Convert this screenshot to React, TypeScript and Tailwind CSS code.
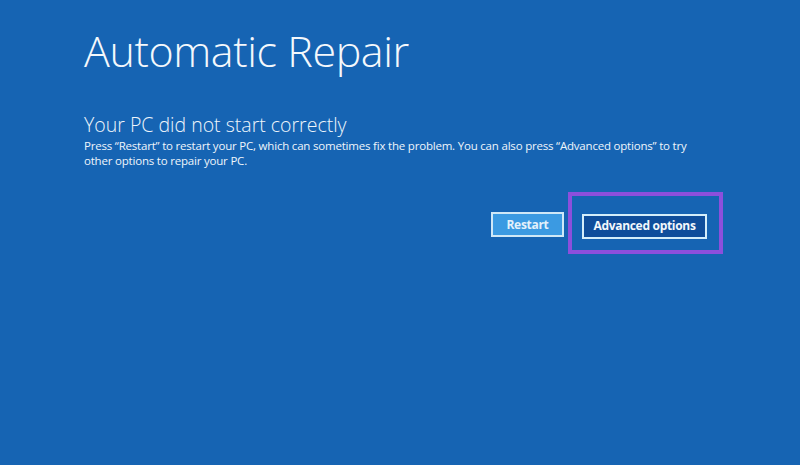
import React from "react";

const font = { fontFamily: '"Open Sans", "Noto Sans", "Liberation Sans", sans-serif' };

export default function App() {
  return (
    <div
      className="w-[800px] h-[465px] overflow-hidden bg-[#1664b3] text-white pl-[84px] pr-[77px]"
      style={font}
    >
      <h1 className="pt-[25px] text-[43px] font-light leading-[52px] tracking-[-0.4px] text-[#f4f8fc]">
        Automatic Repair
      </h1>
      <h2 className="mt-[36px] text-[19.5px] font-light leading-[24px] text-[#eef5fb]">
        Your PC did not start correctly
      </h2>
      <p className="mt-[1px] max-w-[620px] text-[11.5px] leading-[15px] tracking-[-0.2px] text-[#eef5fb]">
        Press “Restart” to restart your PC, which can sometimes fix the problem. You can also
        press “Advanced options” to try other options to repair your PC.
      </p>

      <div className="mt-[24px] flex items-start justify-end gap-[4px]">
        <button className="mt-[20px] h-[25px] w-[73px] border-2 border-[#cfe8f7] bg-[#3b9ae2] text-[12px] font-bold tracking-[-0.3px] text-[#e3f1fb]">
          Restart
        </button>
        <div className="border-4 border-[#8c4fdc] pt-[16px] pb-[11px] pl-[10px] pr-[12px]">
          <button className="h-[25px] w-[125px] border-2 border-[#d4eefa] bg-[#0f4e9b] text-[12px] font-bold tracking-[-0.3px] text-[#f2f8fc]">
            Advanced options
          </button>
        </div>
      </div>
    </div>
  );
}
